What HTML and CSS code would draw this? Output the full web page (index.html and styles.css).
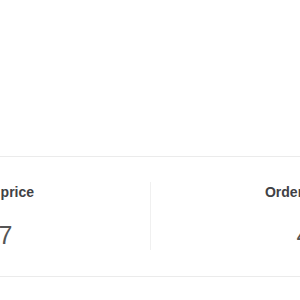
FILE: index.html
```html
<!DOCTYPE html>
<html lang="en">
<head>
<meta charset="utf-8">
<title>Stats</title>
<link rel="stylesheet" href="styles.css">
</head>
<body>
  <div class="top"></div>
  <section class="stats">
    <div class="stats-row">
      <div class="stat">
        <div class="stat-label">Average price</div>
        <div class="stat-value">4.57</div>
      </div>
      <div class="stat stat-divided">
        <div class="stat-label">Order volume</div>
        <div class="stat-value">42</div>
      </div>
    </div>
  </section>
</body>
</html>
```
FILE: styles.css
```css
html, body {
  margin: 0;
  padding: 0;
  background: #ffffff;
  overflow: hidden;
}
body {
  font-family: "Liberation Sans", Arial, sans-serif;
  width: 300px;
  height: 300px;
}
.top {
  height: 156px;
}
.stats {
  border-top: 1px solid #ebebeb;
  border-bottom: 1px solid #ebebeb;
  padding: 25px 0 26px;
  overflow: hidden;
}
.stats-row {
  display: flex;
  margin-left: -174px;
}
.stat {
  flex: 0 0 324px;
  box-sizing: border-box;
  text-align: center;
}
.stat-divided {
  flex-basis: 320px;
  border-left: 1px solid #f0f0f0;
}
.stat-label {
  font-size: 14px;
  line-height: 20px;
  font-weight: bold;
  color: #3f4145;
}
.stat-value {
  margin-top: 18px;
  font-size: 25px;
  line-height: 30px;
  color: #555555;
}
```
